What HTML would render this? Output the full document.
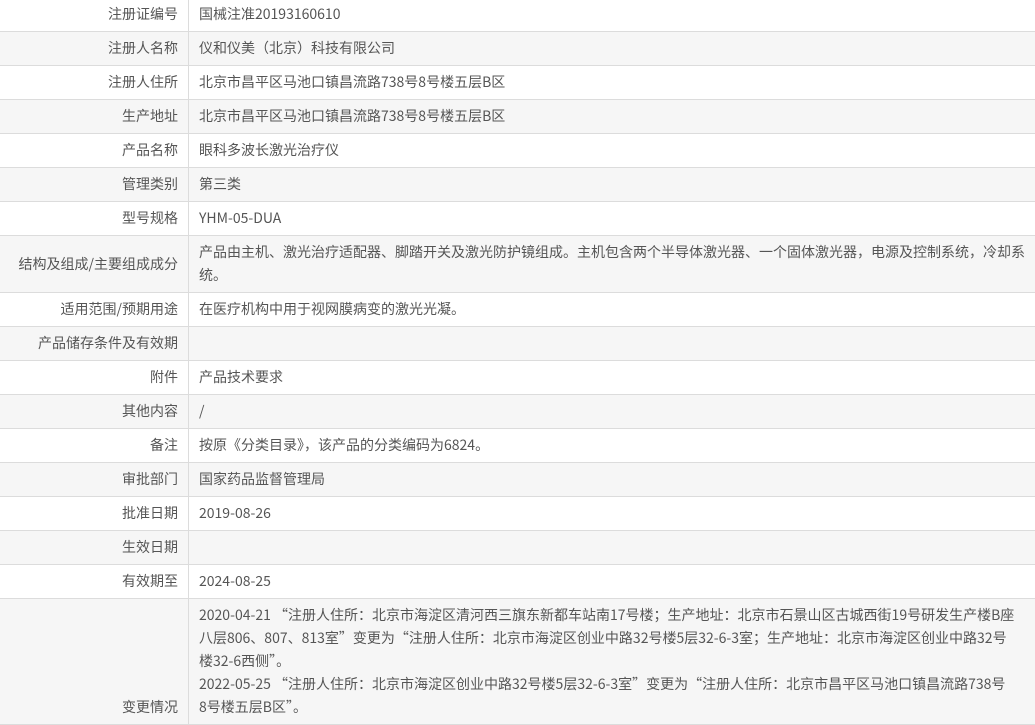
<!DOCTYPE html>
<html><head><meta charset="utf-8"><style>
html,body{margin:0;padding:0;background:#fff;width:1035px;height:723px;overflow:hidden}
table{border-collapse:collapse;width:1035px;position:absolute;top:-2px;left:0;font-family:"Noto Sans CJK SC","Liberation Sans",sans-serif;font-size:14px;color:#555}
td{padding:5px 10px;line-height:23px;border-bottom:1px solid #dcdcdc;vertical-align:middle;white-space:nowrap;overflow:hidden}
td.l{width:169px;text-align:right;border-right:1px solid #dcdcdc}
tr:nth-child(even) td{background:#f6f6f6}
tr.last td.l{vertical-align:bottom}
</style></head><body>
<table>
<tr><td class="l">注册证编号</td><td>国械注准20193160610</td></tr>
<tr><td class="l">注册人名称</td><td>仪和仪美（北京）科技有限公司</td></tr>
<tr><td class="l">注册人住所</td><td>北京市昌平区马池口镇昌流路738号8号楼五层B区</td></tr>
<tr><td class="l">生产地址</td><td>北京市昌平区马池口镇昌流路738号8号楼五层B区</td></tr>
<tr><td class="l">产品名称</td><td>眼科多波长激光治疗仪</td></tr>
<tr><td class="l">管理类别</td><td>第三类</td></tr>
<tr><td class="l">型号规格</td><td>YHM-05-DUA</td></tr>
<tr><td class="l">结构及组成/主要组成成分</td><td>产品由主机、激光治疗适配器、脚踏开关及激光防护镜组成。主机包含两个半导体激光器、一个固体激光器，电源及控制系统，冷却系<br>统。</td></tr>
<tr><td class="l">适用范围/预期用途</td><td>在医疗机构中用于视网膜病变的激光光凝。</td></tr>
<tr><td class="l">产品储存条件及有效期</td><td></td></tr>
<tr><td class="l">附件</td><td>产品技术要求</td></tr>
<tr><td class="l">其他内容</td><td>/</td></tr>
<tr><td class="l">备注</td><td>按原《分类目录》，该产品的分类编码为6824。</td></tr>
<tr><td class="l">审批部门</td><td>国家药品监督管理局</td></tr>
<tr><td class="l">批准日期</td><td>2019-08-26</td></tr>
<tr><td class="l">生效日期</td><td></td></tr>
<tr><td class="l">有效期至</td><td>2024-08-25</td></tr>
<tr class="last"><td class="l">变更情况</td><td>2020-04-21 “注册人住所：北京市海淀区清河西三旗东新都车站南17号楼；生产地址：北京市石景山区古城西街19号研发生产楼B座<br>八层806、807、813室”变更为“注册人住所：北京市海淀区创业中路32号楼5层32-6-3室；生产地址：北京市海淀区创业中路32号<br>楼32-6西侧”。<br>2022-05-25 “注册人住所：北京市海淀区创业中路32号楼5层32-6-3室”变更为“注册人住所：北京市昌平区马池口镇昌流路738号<br>8号楼五层B区”。</td></tr>
</table>
</body></html>
